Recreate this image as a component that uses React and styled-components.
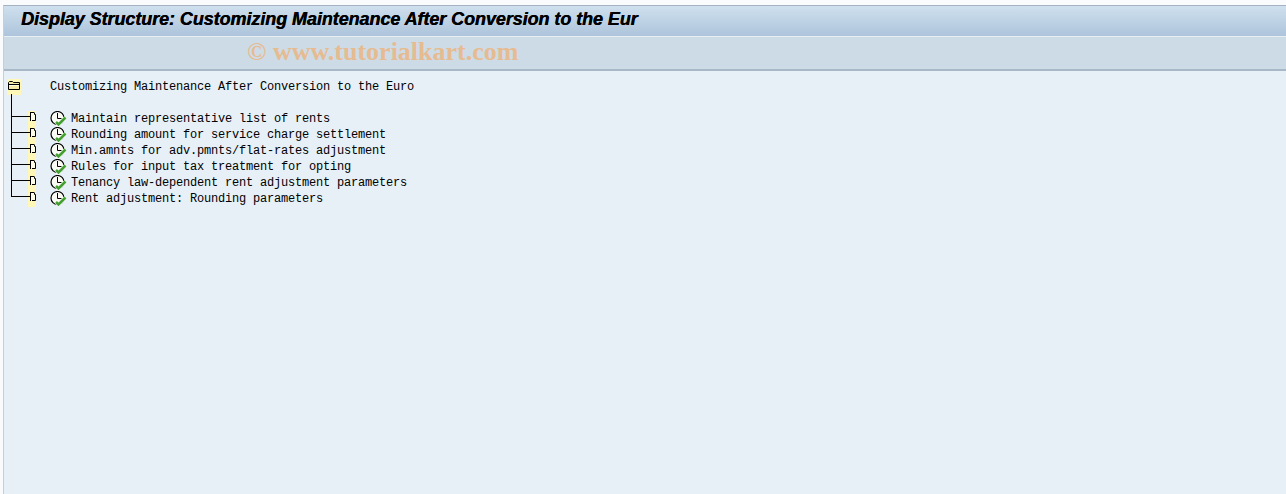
import React from 'react'
import styled, { createGlobalStyle } from 'styled-components'

const GlobalStyle = createGlobalStyle`
  html, body {
    margin: 0;
    padding: 0;
    background: #fafbfd;
  }
`

const Page = styled.div`
  width: 1286px;
  height: 494px;
  padding-top: 5px;
  box-sizing: border-box;
  display: flex;
  flex-direction: column;
  overflow: hidden;
`

const Frame = styled.div`
  flex: 1;
  margin-left: 3px;
  border-top: 1px solid #a5b1c1;
  border-left: 1px solid #c3d0db;
  display: flex;
  flex-direction: column;
  background: #e8f0f7;
`

const TitleBar = styled.div`
  height: 30px;
  flex: none;
  display: flex;
  align-items: center;
  padding-left: 17px;
  background: linear-gradient(to bottom, #cfe0ee, #adc4db);
  border-bottom: 1px solid #e8f0f6;
`

const Title = styled.h1`
  margin: 0 0 3px;
  font: italic bold 18px "Liberation Sans", Arial, sans-serif;
  letter-spacing: -0.07px;
  color: #000;
  text-shadow: 0.4px 0 0 #000;
  white-space: nowrap;
`

const Toolbar = styled.div`
  height: 32px;
  flex: none;
  display: flex;
  align-items: center;
  padding-left: 243px;
  background: #cddbe7;
  border-bottom: 2px solid #a9b8c7;
`

const Watermark = styled.span`
  margin-bottom: 2px;
  font: bold 26px "Liberation Serif", "Times New Roman", serif;
  color: #e6bb91;
  white-space: nowrap;
`

const Tree = styled.div`
  padding: 8px 0 0 3px;
  font: 12px/16px "Liberation Mono", "Courier New", monospace;
  letter-spacing: -0.2px;
  color: #000;
`

const Row = styled.div`
  height: 16px;
  display: flex;
  align-items: center;
  white-space: pre;
`

const RootRow = styled(Row)`
  margin-bottom: 16px;
`

const RootIconCell = styled.div`
  width: 14px;
  height: 16px;
  margin-right: 29px;
  padding-top: 2px;
  box-sizing: border-box;
  background: #fff7b8;
  display: flex;
  align-items: flex-start;
  justify-content: center;
`

const Connector = styled.div`
  position: relative;
  width: 17px;
  height: 16px;
  flex: none;
  margin-left: 4px;
  &::before {
    content: '';
    position: absolute;
    left: 0;
    top: ${p => (p.$first ? '-17px' : '0')};
    bottom: ${p => (p.$last ? '10px' : '0')};
    width: 1px;
    background: #000;
  }
  &::after {
    content: '';
    position: absolute;
    left: 0;
    right: -2px;
    top: 5px;
    height: 1px;
    background: #000;
  }
`

const DocCell = styled.div`
  width: 8px;
  height: 16px;
  flex: none;
  background: #fff7b8;
  display: flex;
  align-items: flex-start;
  justify-content: flex-end;
  margin-right: 14px;
`

const ClockWrap = styled.div`
  width: 17px;
  height: 16px;
  flex: none;
  margin-right: 4px;
`

const Label = styled.span`
  line-height: 16px;
`

function FolderIcon() {
  return (
    <svg width="12" height="9" viewBox="0 0 12 9">
      <path d="M.5 1.5l1-1h3l1 1h6v7H.5z" fill="#f5e9a8" stroke="#000" />
      <path d="M1 3.5h10" stroke="#000" />
      <path d="M1 4h10v1H1z" fill="#fffbe0" />
    </svg>
  )
}

function DocIcon() {
  return (
    <svg width="7" height="11" viewBox="0 0 7 11">
      <path d="M1 1.5h4l1.5 1.5v6.5H1z" fill="#fffde6" />
      <path d="M1.5 1v9M1 1.5h4M5.5 1.5v2h1v6M3 9.5h3.5" fill="none" stroke="#000" />
    </svg>
  )
}

function ClockCheckIcon() {
  return (
    <svg width="17" height="16" viewBox="0 0 17 16">
      <circle cx="7.5" cy="7" r="6.5" fill="#fbfbf6" stroke="#000" strokeWidth="1.2" />
      <path d="M7.5 2v5.5h4" fill="none" stroke="#000" />
      <path d="M6 11l2.5 2.5 7-7" fill="none" stroke="#fbfbf6" strokeWidth="3.6" />
      <path d="M6 11l2.5 2.5 7-7" fill="none" stroke="#43a030" strokeWidth="2.6" />
    </svg>
  )
}

const items = [
  'Maintain representative list of rents',
  'Rounding amount for service charge settlement',
  'Min.amnts for adv.pmnts/flat-rates adjustment',
  'Rules for input tax treatment for opting',
  'Tenancy law-dependent rent adjustment parameters',
  'Rent adjustment: Rounding parameters',
]

export default function App() {
  return (
    <Page>
      <GlobalStyle />
      <Frame>
        <TitleBar>
          <Title>Display Structure: Customizing Maintenance After Conversion to the Eur</Title>
        </TitleBar>
        <Toolbar>
          <Watermark>© www.tutorialkart.com</Watermark>
        </Toolbar>
        <Tree>
          <RootRow>
            <RootIconCell>
              <FolderIcon />
            </RootIconCell>
            <Label>Customizing Maintenance After Conversion to the Euro</Label>
          </RootRow>
          {items.map((item, index) => (
            <Row key={item}>
              <Connector $first={index === 0} $last={index === items.length - 1} />
              <DocCell>
                <DocIcon />
              </DocCell>
              <ClockWrap>
                <ClockCheckIcon />
              </ClockWrap>
              <Label>{item}</Label>
            </Row>
          ))}
        </Tree>
      </Frame>
    </Page>
  )
}
